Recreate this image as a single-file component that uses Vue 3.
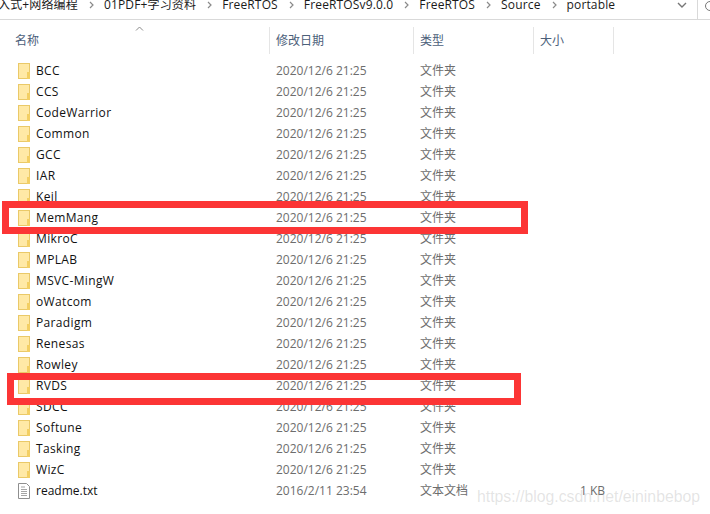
<script setup>
const crumbs = ['入式+网络编程', '01PDF+学习资料', 'FreeRTOS', 'FreeRTOSv9.0.0', 'FreeRTOS', 'Source', 'portable']
const names = ['BCC', 'CCS', 'CodeWarrior', 'Common', 'GCC', 'IAR', 'Keil', 'MemMang', 'MikroC', 'MPLAB', 'MSVC-MingW', 'oWatcom', 'Paradigm', 'Renesas', 'Rowley', 'RVDS', 'SDCC', 'Softune', 'Tasking', 'WizC']
</script>

<template>
  <div class="window">
    <div class="crumbs">
      <template v-for="(c, i) in crumbs" :key="i">
        <span class="crumb">{{ c }}</span>
        <svg v-if="i < crumbs.length - 1" class="sep" width="5" height="8" viewBox="0 0 5 8"><path d="M1 1l3 3-3 3" fill="none" stroke="#8a8a8a" stroke-width="1.2" /></svg>
      </template>
      <svg class="chev" width="10" height="6" viewBox="0 0 10 6"><path d="M1 1l4 4 4-4" fill="none" stroke="#777" stroke-width="1.4" /></svg>
      <span class="bar-div"></span>
      <svg class="refresh" width="6" height="12" viewBox="0 0 6 12"><path d="M5 1.500a4.500 4.500 0 0 0 0 9" fill="none" stroke="#777" /></svg>
    </div>
    <div class="header">
      <div class="hcol c1">名称<svg class="sort" width="9" height="5" viewBox="0 0 9 5"><path d="M1 4.500l3.500-3.500 3.500 3.500" fill="none" stroke="#8a8a8a" /></svg></div>
      <div class="hcol c2">修改日期</div>
      <div class="hcol c3">类型</div>
      <div class="hcol c4">大小</div>
    </div>
    <div class="list">
      <div v-for="n in names" :key="n" class="row">
        <div class="c1 name folder">
          <svg class="icon" width="12" height="16" viewBox="0 0 12 16">
            <rect x="0.500" y="0.500" width="11" height="15" fill="#ffe9a6" stroke="#eac968" />
            <rect x="9" y="9" width="3" height="7" fill="#f3cf63" />
          </svg>
          {{ n }}
        </div>
        <div class="c2 meta">2020/12/6 21:25</div>
        <div class="c3 meta">文件夹</div>
      </div>
      <div class="row">
        <div class="c1 name">
          <svg class="icon" width="12" height="16" viewBox="0 0 12 16">
            <path d="M.5.500h8l3 3v12H.500z" fill="#fff" stroke="#8f8f8f" />
            <path d="M3 4h4M3 6.500h6M3 8.500h6M3 10.500h6M3 12.500h6" stroke="#a5a5a5" />
          </svg>
          readme.txt
        </div>
        <div class="c2 meta">2016/2/11 23:54</div>
        <div class="c3 meta">文本文档</div>
        <div class="c4 meta size">1 KB</div>
      </div>
    </div>
    <div class="mark mark-a"></div>
    <div class="mark mark-b"></div>
    <div class="watermark">https://blog.csdn.net/eininbebop</div>
  </div>
</template>

<style>
html, body { margin: 0; background: #fff; overflow: hidden; }
</style>

<style scoped>
.window {
  position: relative;
  width: 710px;
  height: 514px;
  overflow: hidden;
  background: #fff;
  font-family: "Open Sans", "Noto Sans CJK SC", sans-serif;
  font-size: 12px;
}
.crumbs {
  display: flex;
  align-items: center;
  height: 19px;
  margin-top: -5px;
  padding-top: 5px;
  border-bottom: 1px solid #d9d9d9;
  color: #1a1a1a;
  line-height: 16px;
  letter-spacing: 0.15px;
  white-space: nowrap;
}
.crumb { display: block; margin-top: -10px; }
.crumb:first-child { margin-left: -2px; }
.sep { margin: -10px 10px 0 11px; }
.chev { position: absolute; left: 677px; top: 2px; }
.bar-div { position: absolute; left: 697px; top: 0; height: 19px; width: 1px; background: #d9d9d9; }
.refresh { position: absolute; left: 705px; top: 0; }
.header {
  display: flex;
  height: 27px;
  margin-top: 7px;
  color: #4c607a;
  line-height: 27px;
}
.c1 { width: 269px; flex: none; }
.c2 { width: 144px; flex: none; }
.c3 { width: 120px; flex: none; }
.c4 { width: 80px; flex: none; }
.hcol {
  position: relative;
  box-sizing: border-box;
  padding-left: 6px;
  border-right: 1px solid #e5e5e5;
}
.hcol.c1 { padding-left: 15px; width: 270px; }
.sort { position: absolute; left: 135px; top: -1px; }
.list { margin-top: 6px; }
.row {
  display: flex;
  height: 21px;
  align-items: center;
  line-height: 21px;
}
.name {
  display: flex;
  align-items: center;
  gap: 6px;
  padding-left: 18px;
  box-sizing: border-box;
  color: #111;
}
.folder { letter-spacing: 0.35px; }
.row .c2 { padding-left: 7px; box-sizing: border-box; }
.row .c3 { padding-left: 7px; box-sizing: border-box; }
.row .size { padding-left: 47px; box-sizing: border-box; white-space: nowrap; }
.meta { color: #6d6d6d; }
.icon { flex: none; }
.mark {
  position: absolute;
  box-sizing: border-box;
  border: 7px solid #fc3535;
}
.mark-a { left: 2px; top: 201px; width: 526px; height: 33px; }
.mark-b { left: 7px; top: 373px; width: 514px; height: 32px; }
.watermark {
  position: absolute;
  left: 477px;
  top: 488px;
  font-family: "Liberation Sans", sans-serif;
  font-size: 15.8px;
  color: rgba(150, 150, 150, 0.26);
  white-space: nowrap;
}
</style>
